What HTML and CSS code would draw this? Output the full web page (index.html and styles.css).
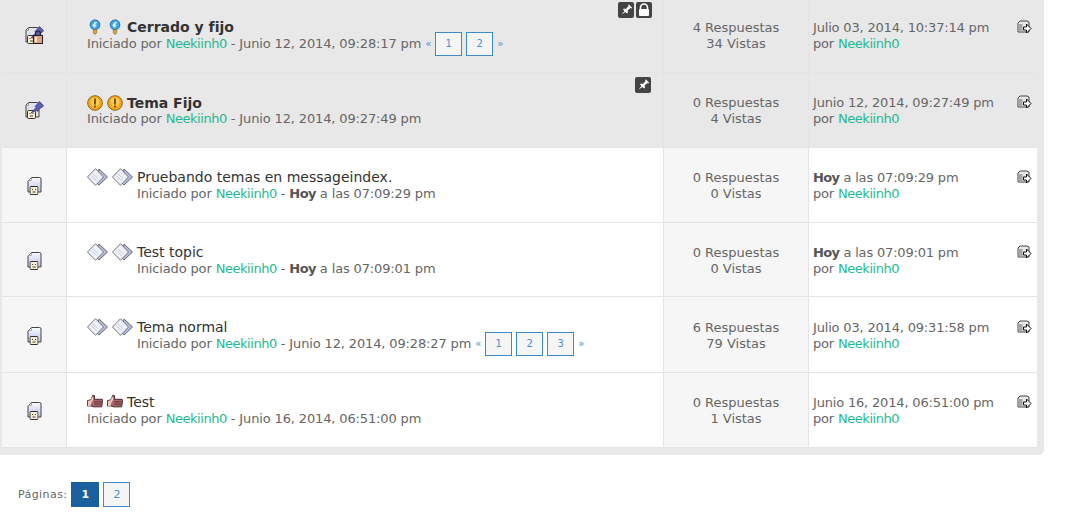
FILE: index.html
```html
<!DOCTYPE html>
<html lang="es">
<head>
    <meta charset="UTF-8">
    <title>Temas</title>
    <link rel="stylesheet" href="styles.css">
</head>
<body>
    <svg class="defs" width="0" height="0">
        <defs>
            <linearGradient id="paper" x1="0" y1="0" x2="0" y2="1">
                <stop offset="0" stop-color="#fafafe"/>
                <stop offset="1" stop-color="#bcc0ea"/>
            </linearGradient>
            <symbol id="face" viewBox="0 0 9 9">
                <rect x=".5" y=".5" width="8" height="8" rx="1" fill="#f7edcf" stroke="#333"/>
                <path d="M3 3v1M6 3v1M3 6h3" stroke="#444" fill="none"/>
            </symbol>
            <symbol id="page" viewBox="0 0 16 20">
                <path d="M5.500 1.500h8a1.500 1.500 0 0 1 1.500 1.500v13h-13v-11z" fill="url(#paper)" stroke="#444"/>
                <path d="M5.500 2v2.500h-3" fill="#fff" stroke="#aaa"/>
                <use href="#face" x="3.500" y="10" width="9" height="9"/>
            </symbol>
            <symbol id="page-pin" viewBox="0 0 20 20">
                <path d="M4.500 2.500h9l1.500 1.500v13h-13v-12z" fill="#e2e2ea" stroke="#444"/>
                <path d="M4.500 3v2.500h-2.500" fill="#f2f2f2" stroke="#999"/>
                <use href="#face" x="3" y="10" width="9" height="9"/>
                <path d="M7 13l5-5.500-1-1 4.500-5 4 4-1 1.500-3.500 2-1 2.500-1.500-1z" fill="#5c5fb5" stroke="#35367a" stroke-width=".7"/>
            </symbol>
            <symbol id="page-lock" viewBox="0 0 20 20">
                <use href="#page-pin" width="20" height="20"/>
                <path d="M11.500 10.500v-2a2.500 2.500 0 0 1 5 0v2" fill="none" stroke="#222" stroke-width="1.200"/>
                <rect x="9.500" y="10.500" width="9" height="8" fill="#e3a184" stroke="#222"/>
                <rect x="11" y="12" width="2" height="5" fill="#fbe4d6"/>
            </symbol>
            <symbol id="bulb" viewBox="0 0 14 18">
                <circle cx="7" cy="6.500" r="5.500" fill="#3fa4e8" stroke="#1c6aa8"/>
                <path d="M4 7l3-4 3 1-3 2 2 1-3 3z" fill="#d7f0ff"/>
                <path d="M5 12h4v3l-1 2h-2l-1-2z" fill="#d2a93e" stroke="#7c6420" stroke-width=".6"/>
            </symbol>
            <symbol id="alert" viewBox="0 0 16 16">
                <circle cx="8" cy="8" r="7.300" fill="#f6a81c" stroke="#8b6210"/>
                <circle cx="8" cy="7" r="4.500" fill="#fbc94f"/>
                <path d="M7 3.500h2v6h-2zM7 10.500h2v2h-2z" fill="#7d5410"/>
            </symbol>
            <symbol id="docs" viewBox="0 0 21 18">
                <path d="M12 1l8.500 8-8.500 8-3-3z" fill="#b4b9e2" stroke="#666"/>
                <path d="M8.500 .7l8 8.300-8 8.300-8-8.300z" fill="#eef0f7" stroke="#777"/>
                <path d="M6 6l5 4.500M4.500 8l5 4.500" stroke="#c3c9e0"/>
            </symbol>
            <symbol id="thumb" viewBox="0 0 18 15">
                <path d="M.5 6.500l4-1 2-5 2 .5v4h7a1.500 1.500 0 0 1 2 1.500l-1 7h-9l-3-1h-4z" fill="#a8676b" stroke="#38161b"/>
                <path d="M1 7l3-1 2-4 1 .5v3l-2 3-1 4h-3z" fill="#f0c6be"/>
                <path d="M8 8h8M8 10.500h8" stroke="#5f2c33"/>
            </symbol>
            <symbol id="last" viewBox="0 0 15 14">
                <path d="M1 3l2-2h7l2 1v10h-11z" fill="#e8e8e8" stroke="#444"/>
                <path d="M1.500 4v7.500h4v-7.500z" fill="#a5a5a5"/>
                <path d="M6.500 7h3v-3l4.500 4.500-4.500 4.500v-3h-3z" fill="#fff" stroke="#111"/>
            </symbol>
            <symbol id="tack" viewBox="0 0 16 16">
                <path d="M3.500 12.500l3-3.500-1.500-1.500 1-1 2 .5 2.500-3-.5-1 1-.5 3 3-.5 1-1-.5-3 2.500.5 2-1 1-1.500-1.500z" fill="#fff"/>
            </symbol>
            <symbol id="padlock" viewBox="0 0 16 16">
                <path d="M4.500 7.500v-2a3.500 3.500 0 0 1 7 0v2" fill="none" stroke="#fff" stroke-width="1.600"/>
                <rect x="3" y="7" width="10" height="7" rx="1" fill="#fff"/>
            </symbol>
        </defs>
    </svg>

    <div class="topics">
        <div class="topic sticky">
            <div class="state"><svg class="state-icon"><use href="#page-lock"/></svg></div>
            <div class="subject">
                <div class="badges">
                    <span class="badge"><svg><use href="#tack"/></svg></span>
                    <span class="badge"><svg><use href="#padlock"/></svg></span>
                </div>
                <div class="title">
                    <svg class="msg bulb"><use href="#bulb"/></svg>
                    <svg class="msg bulb"><use href="#bulb"/></svg>
                    <strong>Cerrado y fijo</strong>
                </div>
                <div class="meta">Iniciado por <a href="#">Neekiinh0</a> - Junio 12, 2014, 09:28:17 pm
                    <span class="pager"><i>«</i><a href="#">1</a><a href="#">2</a><i>»</i></span>
                </div>
            </div>
            <div class="stats">4 Respuestas<br>34 Vistas</div>
            <div class="lastpost">
                <div>Julio 03, 2014, 10:37:14 pm<br>por <a href="#">Neekiinh0</a></div>
                <svg class="last-icon"><use href="#last"/></svg>
            </div>
        </div>

        <div class="topic sticky second">
            <div class="state"><svg class="state-icon"><use href="#page-pin"/></svg></div>
            <div class="subject">
                <div class="badges single">
                    <span class="badge"><svg><use href="#tack"/></svg></span>
                </div>
                <div class="title">
                    <svg class="msg alert"><use href="#alert"/></svg>
                    <svg class="msg alert"><use href="#alert"/></svg>
                    <strong>Tema Fijo</strong>
                </div>
                <div class="meta">Iniciado por <a href="#">Neekiinh0</a> - Junio 12, 2014, 09:27:49 pm</div>
            </div>
            <div class="stats">0 Respuestas<br>4 Vistas</div>
            <div class="lastpost">
                <div>Junio 12, 2014, 09:27:49 pm<br>por <a href="#">Neekiinh0</a></div>
                <svg class="last-icon"><use href="#last"/></svg>
            </div>
        </div>

        <div class="topic">
            <div class="state"><svg class="state-icon plain"><use href="#page"/></svg></div>
            <div class="subject">
                <div class="title">
                    <svg class="msg docs"><use href="#docs"/></svg>
                    <svg class="msg docs"><use href="#docs"/></svg>
                    Pruebando temas en messageindex.
                </div>
                <div class="meta indented">Iniciado por <a href="#">Neekiinh0</a> - <b>Hoy</b> a las 07:09:29 pm</div>
            </div>
            <div class="stats">0 Respuestas<br>0 Vistas</div>
            <div class="lastpost">
                <div><b>Hoy</b> a las 07:09:29 pm<br>por <a href="#">Neekiinh0</a></div>
                <svg class="last-icon"><use href="#last"/></svg>
            </div>
        </div>

        <div class="topic short">
            <div class="state"><svg class="state-icon plain"><use href="#page"/></svg></div>
            <div class="subject">
                <div class="title">
                    <svg class="msg docs"><use href="#docs"/></svg>
                    <svg class="msg docs"><use href="#docs"/></svg>
                    Test topic
                </div>
                <div class="meta indented">Iniciado por <a href="#">Neekiinh0</a> - <b>Hoy</b> a las 07:09:01 pm</div>
            </div>
            <div class="stats">0 Respuestas<br>0 Vistas</div>
            <div class="lastpost">
                <div><b>Hoy</b> a las 07:09:01 pm<br>por <a href="#">Neekiinh0</a></div>
                <svg class="last-icon"><use href="#last"/></svg>
            </div>
        </div>

        <div class="topic tall">
            <div class="state"><svg class="state-icon plain"><use href="#page"/></svg></div>
            <div class="subject">
                <div class="title">
                    <svg class="msg docs"><use href="#docs"/></svg>
                    <svg class="msg docs"><use href="#docs"/></svg>
                    Tema normal
                </div>
                <div class="meta indented">Iniciado por <a href="#">Neekiinh0</a> - Junio 12, 2014, 09:28:27 pm
                    <span class="pager"><i>«</i><a href="#">1</a><a href="#">2</a><a href="#">3</a><i>»</i></span>
                </div>
            </div>
            <div class="stats">6 Respuestas<br>79 Vistas</div>
            <div class="lastpost">
                <div>Julio 03, 2014, 09:31:58 pm<br>por <a href="#">Neekiinh0</a></div>
                <svg class="last-icon"><use href="#last"/></svg>
            </div>
        </div>

        <div class="topic">
            <div class="state"><svg class="state-icon plain"><use href="#page"/></svg></div>
            <div class="subject">
                <div class="title">
                    <svg class="msg thumb"><use href="#thumb"/></svg>
                    <svg class="msg thumb"><use href="#thumb"/></svg>
                    Test
                </div>
                <div class="meta">Iniciado por <a href="#">Neekiinh0</a> - Junio 16, 2014, 06:51:00 pm</div>
            </div>
            <div class="stats">0 Respuestas<br>1 Vistas</div>
            <div class="lastpost">
                <div>Junio 16, 2014, 06:51:00 pm<br>por <a href="#">Neekiinh0</a></div>
                <svg class="last-icon"><use href="#last"/></svg>
            </div>
        </div>
    </div>

    <div class="pagelinks">
        <span class="pages-label">Páginas:</span>
        <a href="#" class="current">1</a>
        <a href="#">2</a>
    </div>
</body>
</html>
```

FILE: styles.css
```css
body {
    font-family: "DejaVu Sans", Verdana, sans-serif;
    font-size: 13px;
    line-height: 16px;
    margin: 0;
    padding: 0;
    background-color: #fff;
    color: #666;
    overflow: hidden;
}
a {
    color: #1fb992;
    text-decoration: none;
    letter-spacing: -0.45px;
}
b {
    color: #555;
    letter-spacing: -0.6px;
}
.defs {
    position: absolute;
}
.topics {
    width: 1035px;
    margin-top: -2px;
    padding: 0 7px 7px 2px;
    background-color: #e8e8e8;
    border-bottom-right-radius: 5px;
}
.topic {
    display: flex;
    height: 74px;
    border-bottom: 1px solid #e4e4e4;
    background-color: #fff;
}
.topic.short {
    height: 73px;
}
.topic.tall {
    height: 75px;
}
.state {
    width: 64px;
    display: flex;
    justify-content: center;
    align-items: center;
    padding-top: 2px;
    background-color: #f6f6f6;
    border-right: 1px solid #e4e4e4;
}
.state-icon {
    width: 20px;
    height: 20px;
}
.state-icon.plain {
    width: 16px;
    height: 20px;
}
.subject {
    position: relative;
    width: 576px;
    padding: 20px 0 0 20px;
    border-right: 1px solid #e4e4e4;
}
.tall .subject {
    padding-top: 21px;
}
.title {
    display: flex;
    align-items: center;
    gap: 4px;
    height: 17px;
    font-size: 14px;
    color: #333;
}
.second .title {
    margin-top: 1px;
}
.second .meta {
    margin-top: 0;
}
.msg {
    width: 21px;
    height: 18px;
}
.msg.bulb {
    width: 16px;
    height: 16px;
}
.msg.alert {
    width: 16px;
    height: 16px;
}
.msg.thumb {
    width: 16px;
    height: 15px;
}
.meta {
    height: 16px;
    margin-top: 1px;
    white-space: nowrap;
    letter-spacing: -0.14px;
}
.meta.indented {
    padding-left: 50px;
}
.pager {
    display: inline-flex;
    align-items: center;
    gap: 4px;
    height: 16px;
    vertical-align: top;
    font-size: 10px;
    letter-spacing: 0;
    color: #4a8fd0;
}
.pager i {
    font-style: normal;
}
.pager a {
    width: 25px;
    height: 22px;
    line-height: 22px;
    text-align: center;
    letter-spacing: 0;
    color: #4a8fd0;
    background-color: #f5f5f5;
    border: 1px solid #3d8bcd;
}
.badges {
    position: absolute;
    top: 4px;
    right: 11px;
    display: flex;
    gap: 2px;
}
.badges.single {
    top: 4px;
    right: 12px;
}
.badge {
    width: 16px;
    height: 16px;
    border-radius: 2px;
    background-color: #444;
}
.badge svg {
    display: block;
    width: 16px;
    height: 16px;
}
.stats {
    width: 144px;
    padding-top: 22px;
    text-align: center;
    border-right: 1px solid #e4e4e4;
    background-color: #f6f6f6;
}
.lastpost {
    flex: 1;
    display: flex;
    justify-content: space-between;
    padding: 22px 5px 0 4px;
    letter-spacing: -0.18px;
}
.tall .stats,
.tall .lastpost {
    padding-top: 23px;
}
.last-icon {
    width: 15px;
    height: 14px;
}
.sticky .state {
    padding-top: 0;
}
.sticky,
.sticky .state,
.sticky .stats {
    background-color: #e8e8e8;
}
.pagelinks {
    display: flex;
    align-items: center;
    gap: 4px;
    margin: 27px 0 0 18px;
    font-size: 11px;
}
.pages-label {
    letter-spacing: 0.42px;
}
.pagelinks a {
    width: 25px;
    height: 23px;
    line-height: 23px;
    text-align: center;
    letter-spacing: 0;
    color: #4a8fd0;
    background-color: #f5f5f5;
    border: 1px solid #3d8bcd;
}
.pagelinks a.current {
    width: 28px;
    height: 25px;
    line-height: 25px;
    font-weight: bold;
    color: #fff;
    background-color: #1a5f9e;
    border: 0;
}
```
